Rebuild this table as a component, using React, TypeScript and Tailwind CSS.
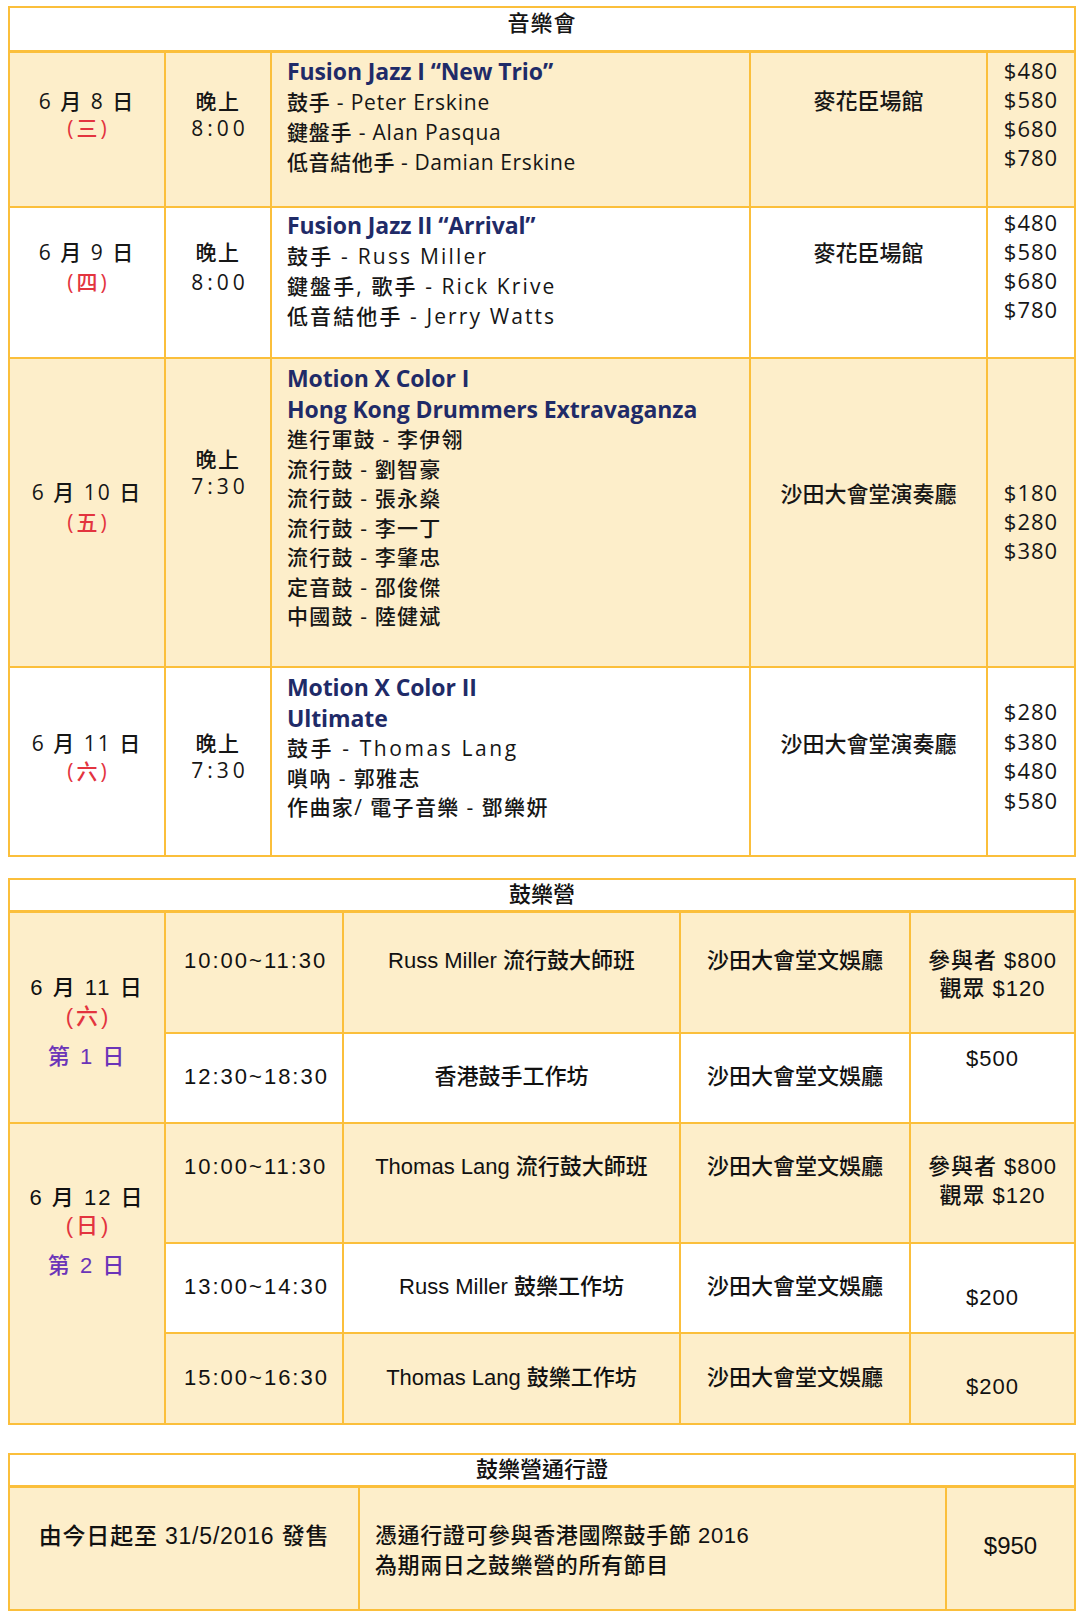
import React from "react";

type Kids = { className?: string; children?: React.ReactNode };

// shared cell: golden grid lines, children laid out top-down
function Cell({ className = "", children }: Kids) {
  return <div className={`border-[#fbbf3b] ${className}`}>{children}</div>;
}

function Title({ children }: Kids) {
  return (
    <div className="font-['Open_Sans',sans-serif] text-[23px] font-bold leading-[31px] tracking-[-0.1px] text-[#1f2b68]">
      {children}
    </div>
  );
}

function Day({ date, week }: { date: string; week: string }) {
  return (
    <>
      <div className="tracking-[2px]">{date}</div>
      <div className="tracking-[3px] pl-[3px] text-[#e3343f]">{week}</div>
    </>
  );
}

type Line = { text: string; cls: string };

const concerts = [
  {
    bg: "bg-[#fdeeca]",
    date: "6 月 8 日",
    week: "(三)",
    datePad: "pt-[35px] leading-[27px]",
    time: "8:00",
    timePad: "pt-[35px] leading-[27px]",
    titles: ["Fusion Jazz I \u201cNew Trio\u201d"],
    titleCls: "",
    lines: [
      { text: "鼓手 - Peter Erskine", cls: "tracking-[0.8px]" },
      { text: "鍵盤手 - Alan Pasqua", cls: "tracking-[0.8px]" },
      { text: "低音結他手 - Damian Erskine", cls: "tracking-[0.6px]" },
    ] as Line[],
    lineCls: "leading-[30px]",
    progPad: "pt-[3px]",
    venue: "麥花臣場館",
    venuePad: "pt-[32px]",
    prices: ["$480", "$580", "$680", "$780"],
    pricePad: "pt-[3px] leading-[29px]",
  },
  {
    bg: "bg-white",
    date: "6 月 9 日",
    week: "(四)",
    datePad: "pt-[29px] leading-[30px]",
    time: "8:00",
    timePad: "pt-[29px] leading-[30px]",
    titles: ["Fusion Jazz II \u201cArrival\u201d"],
    titleCls: "",
    lines: [
      { text: "鼓手 - Russ Miller", cls: "tracking-[2.2px]" },
      { text: "鍵盤手, 歌手 - Rick Krive", cls: "tracking-[2.1px]" },
      { text: "低音結他手 - Jerry Watts", cls: "tracking-[2.1px]" },
    ] as Line[],
    lineCls: "leading-[30px]",
    progPad: "pt-[2px]",
    venue: "麥花臣場館",
    venuePad: "pt-[29px]",
    prices: ["$480", "$580", "$680", "$780"],
    pricePad: "pt-0 leading-[29px]",
  },
  {
    bg: "bg-[#fdeeca]",
    date: "6 月 10 日",
    week: "(五)",
    datePad: "pt-[118px] leading-[30px]",
    time: "7:30",
    timePad: "pt-[87px] leading-[27px]",
    titles: ["Motion X Color I", "Hong Kong Drummers Extravaganza"],
    titleCls: "",
    lines: [
      { text: "進行軍鼓 - 李伊翎", cls: "tracking-[1.2px]" },
      { text: "流行鼓 - 劉智豪", cls: "tracking-[1.2px]" },
      { text: "流行鼓 - 張永燊", cls: "tracking-[1.2px]" },
      { text: "流行鼓 - 李一丁", cls: "tracking-[1.2px]" },
      { text: "流行鼓 - 李肇忠", cls: "tracking-[1.2px]" },
      { text: "定音鼓 - 邵俊傑", cls: "tracking-[1.2px]" },
      { text: "中國鼓 - 陸健斌", cls: "tracking-[1.2px]" },
    ] as Line[],
    lineCls: "leading-[29.5px]",
    progPad: "pt-[4px]",
    venue: "沙田大會堂演奏廳",
    venuePad: "pt-[119px]",
    prices: ["$180", "$280", "$380"],
    pricePad: "pt-[119px] leading-[29px]",
  },
  {
    bg: "bg-white",
    date: "6 月 11 日",
    week: "(六)",
    datePad: "pt-[61px] leading-[28px]",
    time: "7:30",
    timePad: "pt-[62px] leading-[27px]",
    titles: ["Motion X Color II", "Ultimate"],
    titleCls: "",
    lines: [
      { text: "鼓手 - Thomas Lang", cls: "tracking-[2.6px]" },
      { text: "嗩吶 - 郭雅志", cls: "tracking-[1.4px]" },
      { text: "作曲家/ 電子音樂 - 鄧樂妍", cls: "tracking-[1.4px]" },
    ] as Line[],
    lineCls: "leading-[29.5px]",
    progPad: "pt-[4px]",
    venue: "沙田大會堂演奏廳",
    venuePad: "pt-[60px]",
    prices: ["$280", "$380", "$480", "$580"],
    pricePad: "pt-[29px] leading-[29.5px]",
  },
];

function ConcertTable() {
  return (
    <div className="ml-2 mt-[6px] w-[1068px] border-2 border-[#fbbf3b] font-['Open_Sans','Noto_Sans_CJK_TC',sans-serif] text-[21px] font-medium text-[#161616]">
      <div className="h-[45px] border-b-[3px] border-[#fbbf3b] pt-[-2px] text-center text-[22px] leading-[28px] tracking-[1px]">
        音樂會
      </div>
      <div className="grid grid-cols-[156px_106px_479px_237px_86px] grid-rows-[155px_151px_309px_187px]">
        {concerts.map((c, i) => {
          const last = i === concerts.length - 1 ? "" : "border-b-2";
          return (
            <React.Fragment key={c.date}>
              <Cell className={`${c.bg} ${last} border-r-2 text-center ${c.datePad}`}>
                <Day date={c.date} week={c.week} />
              </Cell>
              <Cell className={`${c.bg} ${last} border-r-2 text-center ${c.timePad}`}>
                <div className="tracking-[1.5px]">晚上</div>
                <div className="pl-[4px] tracking-[4px]">{c.time}</div>
              </Cell>
              <Cell className={`${c.bg} ${last} border-r-2 pl-[15px] ${c.progPad}`}>
                {c.titles.map((t) => (
                  <Title key={t}>{t}</Title>
                ))}
                {c.lines.map((l) => (
                  <div key={l.text} className={`${c.lineCls} ${l.cls}`}>
                    {l.text}
                  </div>
                ))}
              </Cell>
              <Cell className={`${c.bg} ${last} border-r-2 text-center text-[22px] leading-[30px] ${c.venuePad}`}>
                {c.venue}
              </Cell>
              <Cell className={`${c.bg} ${last} text-center text-[22px] tracking-[1px] ${c.pricePad}`}>
                {c.prices.map((p) => (
                  <div key={p}>{p}</div>
                ))}
              </Cell>
            </React.Fragment>
          );
        })}
      </div>
    </div>
  );
}

const sessions = [
  {
    bg: "bg-[#fdeeca]",
    time: "10:00~11:30",
    name: "Russ Miller 流行鼓大師班",
    pad: "pt-[33px]",
    prices: ["參與者 $800", "觀眾 $120"],
    pricePad: "pt-[34px] leading-[28px]",
    row: "row-start-1",
  },
  {
    bg: "bg-white",
    time: "12:30~18:30",
    name: "香港鼓手工作坊",
    pad: "pt-[28px]",
    prices: ["$500"],
    pricePad: "pt-[10px] leading-[30px]",
    row: "row-start-2",
  },
  {
    bg: "bg-[#fdeeca]",
    time: "10:00~11:30",
    name: "Thomas Lang 流行鼓大師班",
    pad: "pt-[28px]",
    prices: ["參與者 $800", "觀眾 $120"],
    pricePad: "pt-[28px] leading-[29px]",
    row: "row-start-3",
  },
  {
    bg: "bg-white",
    time: "13:00~14:30",
    name: "Russ Miller 鼓樂工作坊",
    pad: "pt-[28px]",
    prices: ["$200"],
    pricePad: "pt-[39px] leading-[30px]",
    row: "row-start-4",
  },
  {
    bg: "bg-[#fdeeca]",
    time: "15:00~16:30",
    name: "Thomas Lang 鼓樂工作坊",
    pad: "pt-[29px]",
    prices: ["$200"],
    pricePad: "pt-[38px] leading-[30px]",
    row: "row-start-5",
  },
];

function CampTable() {
  return (
    <div className="ml-2 mt-[21px] w-[1068px] border-2 border-[#fbbf3b] font-['Liberation_Sans','Noto_Sans_CJK_TC',sans-serif] text-[22px] font-medium text-[#111]">
      <div className="h-[33px] border-b-[3px] border-[#fbbf3b] text-center leading-[30px]">鼓樂營</div>
      <div className="grid grid-cols-[156px_178px_337px_230px_163px] grid-rows-[121px_90px_120px_90px_89px]">
        <Cell className="col-start-1 row-start-1 row-span-2 border-b-2 border-r-2 bg-[#fdeeca] pt-[60px] text-center leading-[29px]">
          <Day date="6 月 11 日" week="(六)" />
          <div className="mt-[11px] tracking-[2px] text-[#6b34b8]">第 1 日</div>
        </Cell>
        <Cell className="col-start-1 row-start-3 row-span-3 border-r-2 bg-[#fdeeca] pt-[60px] text-center leading-[28px]">
          <Day date="6 月 12 日" week="(日)" />
          <div className="mt-[12px] tracking-[2px] text-[#6b34b8]">第 2 日</div>
        </Cell>
        {sessions.map((s, i) => {
          const last = i === sessions.length - 1 ? "" : "border-b-2";
          return (
            <React.Fragment key={s.row}>
              <Cell className={`col-start-2 ${s.row} ${s.bg} ${last} border-r-2 pl-[18px] leading-[30px] tracking-[2px] ${s.pad}`}>
                {s.time}
              </Cell>
              <Cell className={`col-start-3 ${s.row} ${s.bg} ${last} border-r-2 text-center leading-[30px] ${s.pad}`}>
                {s.name}
              </Cell>
              <Cell className={`col-start-4 ${s.row} ${s.bg} ${last} border-r-2 text-center leading-[30px] ${s.pad}`}>
                沙田大會堂文娛廳
              </Cell>
              <Cell className={`col-start-5 ${s.row} ${s.bg} ${last} text-center tracking-[1px] ${s.pricePad}`}>
                {s.prices.map((p) => (
                  <div key={p}>{p}</div>
                ))}
              </Cell>
            </React.Fragment>
          );
        })}
      </div>
    </div>
  );
}

function PassTable() {
  return (
    <div className="mb-2 ml-2 mt-[28px] w-[1068px] border-2 border-[#fbbf3b] font-['Liberation_Sans','Noto_Sans_CJK_TC',sans-serif] text-[22px] font-medium text-[#111]">
      <div className="h-[33px] border-b-[3px] border-[#fbbf3b] text-center leading-[30px]">鼓樂營通行證</div>
      <div className="grid h-[121px] grid-cols-[350px_587px_127px] bg-[#fdeeca] leading-[30px]">
        <Cell className="border-r-2 pt-[33px] text-center text-[23px] tracking-[0.8px]">由今日起至 31/5/2016 發售</Cell>
        <Cell className="border-r-2 pl-[15px] pt-[33px] tracking-[0.6px]">
          <div>憑通行證可參與香港國際鼓手節 2016</div>
          <div>為期兩日之鼓樂營的所有節目</div>
        </Cell>
        <Cell className="pt-[43px] text-center text-[24px]">$950</Cell>
      </div>
    </div>
  );
}

export default function App() {
  return (
    <div className="min-h-[1618px] w-[1086px] overflow-hidden bg-white">
      <ConcertTable />
      <CampTable />
      <PassTable />
    </div>
  );
}
